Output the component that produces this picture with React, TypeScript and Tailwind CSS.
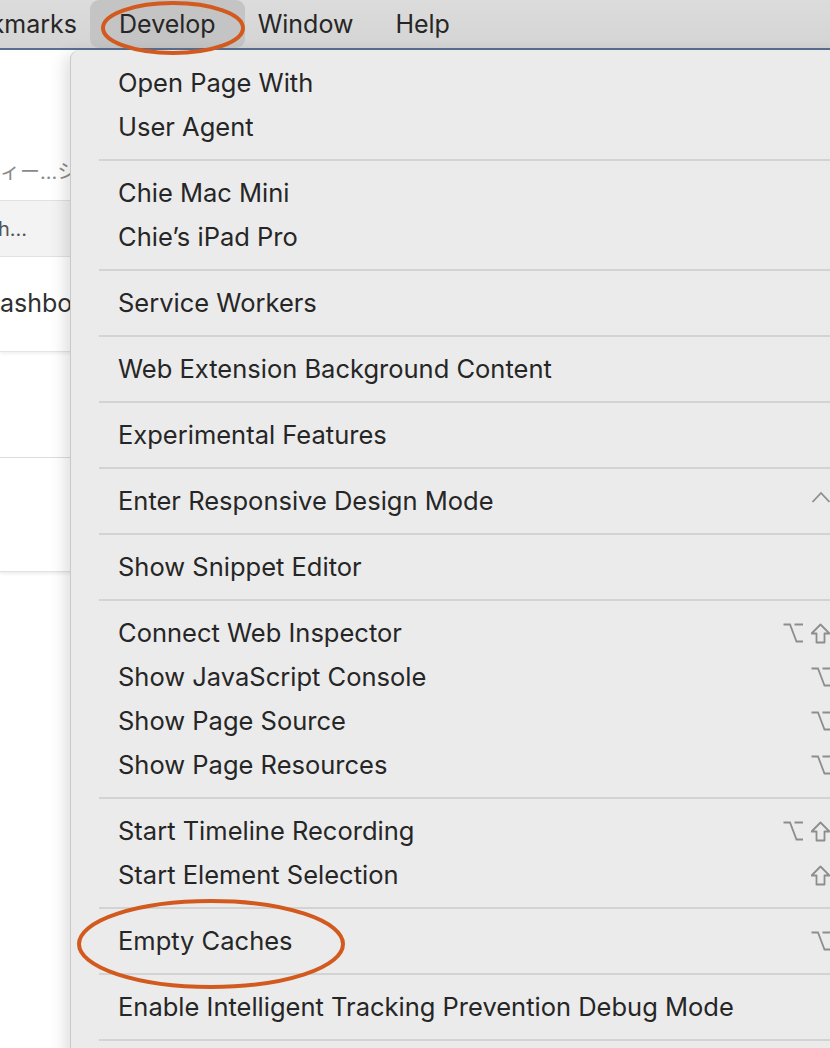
import React from "react";

type Row = { label: string; keys?: string[] } | "sep";

const rows: Row[] = [
  { label: "Open Page With", keys: ["›"] },
  { label: "User Agent", keys: ["›"] },
  "sep",
  { label: "Chie Mac Mini", keys: ["›"] },
  { label: "Chie’s iPad Pro", keys: ["›"] },
  "sep",
  { label: "Service Workers", keys: ["›"] },
  "sep",
  { label: "Web Extension Background Content", keys: ["›"] },
  "sep",
  { label: "Experimental Features", keys: ["›"] },
  "sep",
  { label: "Enter Responsive Design Mode", keys: ["⌃", "⌘", "R"] },
  "sep",
  { label: "Show Snippet Editor" },
  "sep",
  { label: "Connect Web Inspector", keys: ["⌥", "⇧", "⌘", "I"] },
  { label: "Show JavaScript Console", keys: ["⌥", "⌘", "C"] },
  { label: "Show Page Source", keys: ["⌥", "⌘", "U"] },
  { label: "Show Page Resources", keys: ["⌥", "⌘", "A"] },
  "sep",
  { label: "Start Timeline Recording", keys: ["⌥", "⇧", "⌘", "T"] },
  { label: "Start Element Selection", keys: ["⇧", "⌘", "C"] },
  "sep",
  { label: "Empty Caches", keys: ["⌥", "⌘", "E"] },
  "sep",
  { label: "Enable Intelligent Tracking Prevention Debug Mode" },
  "sep",
  { label: "Disable Images" },
];

function Key({ k }: { k: string }) {
  // modifier glyphs drawn as outlines, like the macOS menu
  if (k === "⌥")
    return (
      <svg width="20" height="20" viewBox="0 0 20 20" fill="none" stroke="#8d8d8d" strokeWidth="1.8">
        <path d="M0.5 1.5H7L13.5 18.5H20M11.5 1.5H20" />
      </svg>
    );
  if (k === "⇧")
    return (
      <svg width="20" height="21" viewBox="0 0 20 21" fill="none" stroke="#8d8d8d" strokeWidth="1.8" strokeLinejoin="round">
        <path d="M9.5 1.5L18.5 10.5H13.5V19.5H5.5V10.5H0.5Z" />
      </svg>
    );
  if (k === "⌃")
    return (
      <svg width="20" height="20" viewBox="0 0 20 20" fill="none" stroke="#8d8d8d" strokeWidth="1.8">
        <path d="M1.5 11L10 2L18.5 11" />
      </svg>
    );
  return <span className="text-[22px] leading-none text-[#8d8d8d]">{k}</span>;
}

export default function App() {
  return (
    <div className="relative h-[1048px] w-[830px] overflow-hidden bg-white font-['Inter','Noto_Sans_CJK_JP',sans-serif] text-[#262626]">
      {/* menu bar */}
      <header className="flex h-[50px] items-stretch border-b-2 border-[#5a6f90] bg-gradient-to-b from-[#dcdcdc] to-[#d4d4d4] text-[25px] leading-none">
        <div className="flex w-[98px] items-center justify-end overflow-hidden whitespace-nowrap pr-[21px]">Bookmarks</div>
        <div className="-mx-[8px] flex items-center rounded-[9px] bg-[#c4c4c4] px-[29px]">Develop</div>
        <div className="flex items-center px-[21px]">Window</div>
        <div className="flex items-center px-[21px]">Help</div>
      </header>

      {/* page behind the menu */}
      <main className="flex flex-col">
        <div className="flex h-[150px] items-end whitespace-nowrap pb-[14px] text-[20px] leading-[28px] text-[#8a8a8a]">
          ィー...シート
        </div>
        <div className="flex h-[57px] items-center border-y border-[#e1e1e1] bg-[#f3f3f3]">
          <div className="flex w-[27px] justify-end whitespace-nowrap text-[20px] text-[#555]">Search...</div>
        </div>
        <div className="flex h-[95px] items-center whitespace-nowrap border-b border-[#e4e4e4] shadow-[0_2px_3px_rgba(0,0,0,0.06)]">
          <span className="-ml-[18px] text-[25px] text-[#303030]">Dashboard</span>
        </div>
        <div className="h-[106px] border-b border-[#dcdcdc]" />
        <div className="h-[114px] border-b border-[#e2e2e2] shadow-[0_2px_3px_rgba(0,0,0,0.07)]" />
      </main>

      {/* Develop dropdown */}
      <div className="absolute left-[70px] top-[50px] w-[840px] rounded-tl-[9px] border-l border-[#c9c9c9] bg-[#ebebeb] pt-[11px] text-[25.5px] shadow-[-5px_4px_16px_rgba(0,0,0,0.13)]">
        {rows.map((r, i) =>
          r === "sep" ? (
            <div key={i} className="flex h-[22px] items-center pl-[28px]">
              <div className="h-[2px] flex-1 bg-[#d3d3d3]" />
            </div>
          ) : (
            <div key={i} className="flex h-[44px] items-center pl-[47px] pr-[15px]">
              <span className="flex-1 whitespace-nowrap">{r.label}</span>
              <div className="flex w-[112px] justify-end">
                {r.keys?.map((k, j) => (
                  <div key={j} className="flex w-[28px] items-center">
                    <Key k={k} />
                  </div>
                ))}
              </div>
            </div>
          )
        )}
      </div>

      {/* orange annotation rings */}
      <svg className="pointer-events-none absolute left-0 top-0" width="830" height="1048" fill="none" stroke="#d35a1f" strokeWidth="4">
        <ellipse cx="173" cy="28" rx="70" ry="25" />
        <ellipse cx="211" cy="944" rx="132" ry="43" />
      </svg>
    </div>
  );
}
